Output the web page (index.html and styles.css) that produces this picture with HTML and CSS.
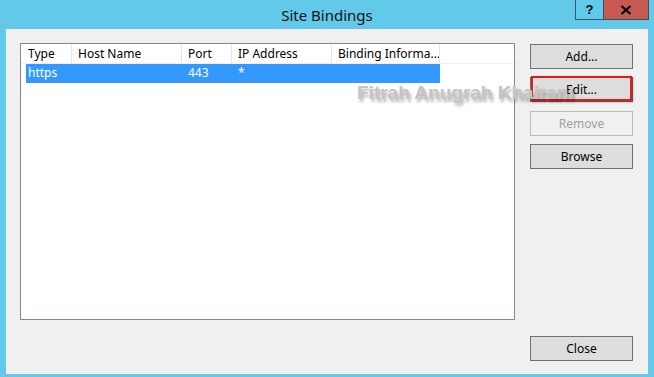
FILE: index.html
```html
<!DOCTYPE html>
<html>
<head>
<meta charset="utf-8">
<link rel="stylesheet" href="styles.css">
</head>
<body>
<div class="window">
  <div class="titlebar">
    <div class="title">Site Bindings</div>
    <div class="caption-buttons">
      <div class="cap-btn help">?</div>
      <div class="cap-btn close">
        <svg width="12" height="10" viewBox="0 0 12 10"><path d="M1.5 1 L10.5 9 M10.5 1 L1.5 9" stroke="#000" stroke-width="2.2" fill="none"/></svg>
      </div>
    </div>
  </div>
  <div class="client">
    <div class="listbox">
      <div class="header">
        <div class="col c1">Type</div>
        <div class="col c2">Host Name</div>
        <div class="col c3">Port</div>
        <div class="col c4">IP Address</div>
        <div class="col c5">Binding Informa...</div>
      </div>
      <div class="row selected">
        <div class="cell c1">https</div>
        <div class="cell c2"></div>
        <div class="cell c3">443</div>
        <div class="cell c4">*</div>
        <div class="cell c5"></div>
      </div>
    </div>
    <div class="actions">
      <button class="btn">Add...</button>
      <button class="btn highlighted">Edit...</button>
      <button class="btn disabled">Remove</button>
      <button class="btn">Browse</button>
      <button class="btn close-btn">Close</button>
    </div>
    <div class="watermark">Fitrah Anugrah Khairani</div>
  </div>
</div>
</body>
</html>
```
FILE: styles.css
```css
html, body {
  margin: 0;
  padding: 0;
}
body {
  background: #63c9e9;
  width: 654px;
  height: 377px;
  overflow: hidden;
  font-family: "Noto Sans", "Open Sans", sans-serif;
  font-size: 12px;
  color: #000;
}
.window {
  display: flex;
  flex-direction: column;
  height: 377px;
}
.titlebar {
  position: relative;
  height: 29px;
  display: flex;
  align-items: center;
  justify-content: center;
}
.title {
  font-size: 15px;
  color: #111;
  margin-top: 0px;
}
.caption-buttons {
  position: absolute;
  top: 0;
  right: 5px;
  display: flex;
}
.cap-btn {
  height: 20px;
  display: flex;
  align-items: center;
  justify-content: center;
  box-sizing: border-box;
}
.cap-btn.help {
  width: 28px;
  border: 1px solid #2d5e6e;
  border-top: none;
  border-right: none;
  font-family: "Liberation Sans", sans-serif;
  font-weight: bold;
  font-size: 13px;
}
.cap-btn.close {
  width: 46px;
  background: #c75a50;
  border: 1px solid #3d4f55;
  border-top: none;
}
.client {
  position: relative;
  margin: 0 6px;
  height: 345px;
  background: #f0f0f0;
  box-sizing: border-box;
  padding: 14px 15px 13px 14px;
  display: grid;
  grid-template-columns: 495px 103px;
  column-gap: 15px;
  align-items: start;
}
.listbox {
  height: 277px;
  box-sizing: border-box;
  border: 1px solid #828790;
  background: #fff;
}
.header {
  display: flex;
  height: 20px;
  border-bottom: 1px solid #f0f0f0;
  box-sizing: border-box;
}
.col {
  box-sizing: border-box;
  padding-left: 6px;
  line-height: 19px;
  border-right: 1px solid #e5e5e5;
  white-space: nowrap;
  overflow: hidden;
}
.c1 { width: 51px; padding-left: 7px; }
.c2 { width: 110px; }
.c3 { width: 50px; }
.c4 { width: 100px; }
.c5 { width: 108px; }
.row {
  display: flex;
  height: 19px;
  margin-left: 5px;
  width: 414px;
}
.row.selected {
  background: #3399ff;
  color: #fff;
}
.cell {
  box-sizing: border-box;
  padding-left: 6px;
  line-height: 18px;
  white-space: nowrap;
}
.cell.c1 {
  width: 46px;
  padding-left: 2px;
}
.actions {
  display: flex;
  flex-direction: column;
  height: 318px;
  padding-top: 1px;
  box-sizing: border-box;
}
.btn {
  height: 25px;
  width: 103px;
  box-sizing: border-box;
  border: 1px solid #707070;
  background: #dddddd;
  font-family: inherit;
  font-size: 12px;
  color: #000;
  padding: 0;
  margin: 0 0 8px 0;
}
.btn.highlighted {
  position: relative;
  margin-bottom: 9px;
}
.btn.highlighted::after {
  content: "";
  position: absolute;
  left: 0px;
  top: -2px;
  width: 101px;
  height: 25px;
  box-sizing: border-box;
  border: 2px solid #e31b1b;
  box-shadow: 1px 1px 2px rgba(0,0,0,0.35);
}
.btn.disabled {
  background: #f0f0f0;
  border-color: #bcbcbc;
  color: #a0a0a0;
}
.btn.close-btn {
  margin-top: auto;
  margin-bottom: 0;
}
.watermark {
  position: absolute;
  left: 351px;
  top: 54px;
  font-family: "Liberation Sans", Arial, sans-serif;
  font-weight: bold;
  font-size: 19px;
  line-height: 19px;
  color: #c4c4c4;
  text-shadow: 2px 3px 3px rgba(0,0,0,0.3);
  white-space: nowrap;
  pointer-events: none;
}
```
